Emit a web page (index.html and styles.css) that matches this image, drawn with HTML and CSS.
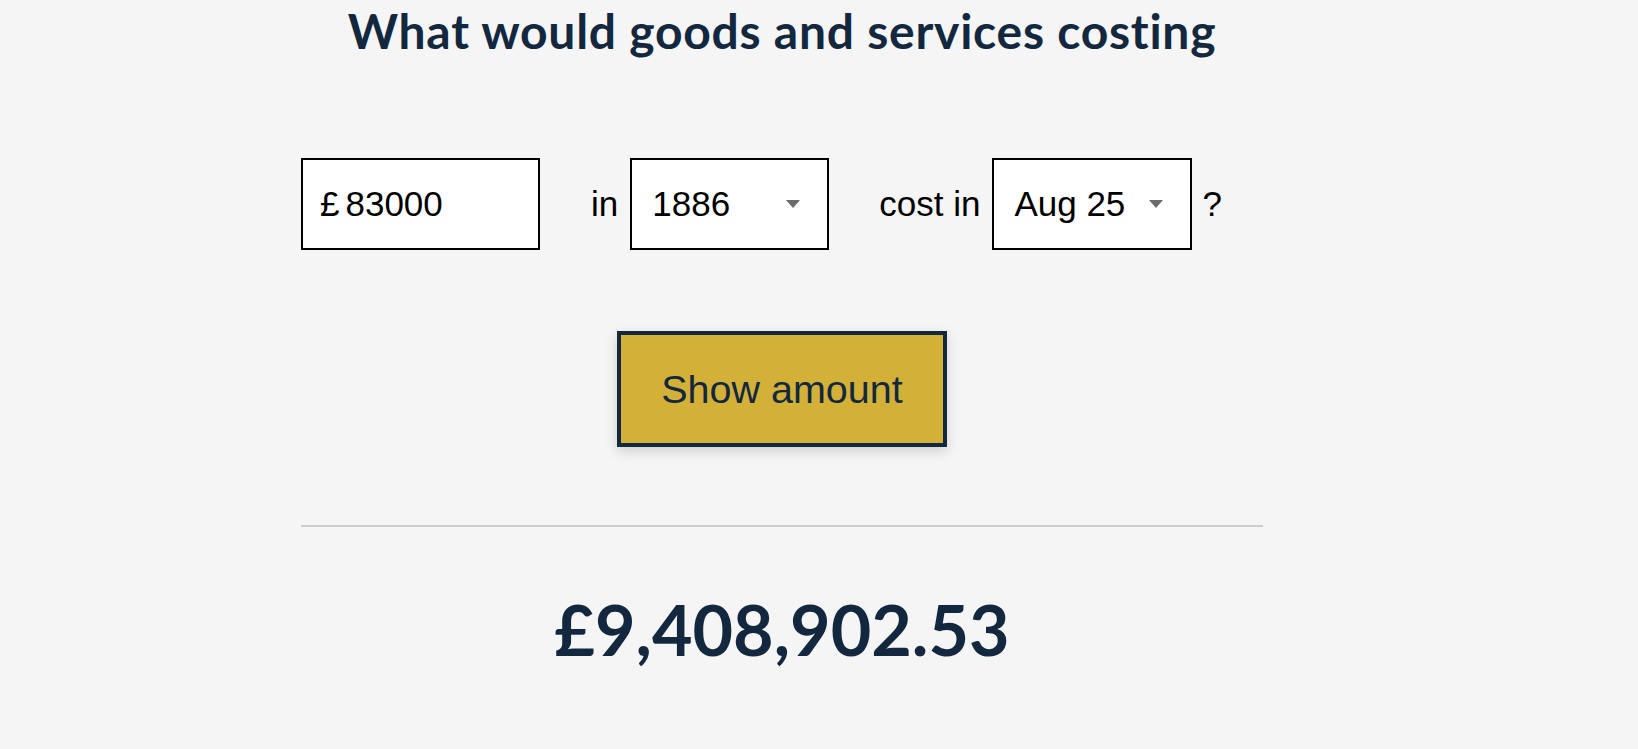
FILE: index.html
```html
<!DOCTYPE html>
<html lang="en">
<head>
<meta charset="utf-8">
<title>Inflation calculator</title>
<link rel="stylesheet" href="styles.css">
</head>
<body>
<main class="calc">
  <h1 class="calc-title">What would goods and services costing</h1>
  <form class="calc-form">
    <div class="calc-row">
      <label class="field field-amount">
        <span class="currency">£</span>
        <input class="amount-input" type="text" value="83000">
      </label>
      <span class="word word-in">in</span>
      <div class="field field-select field-year">
        <span class="select-value">1886</span>
        <span class="caret"></span>
      </div>
      <span class="word word-cost">cost in</span>
      <div class="field field-select field-month">
        <span class="select-value">Aug 25</span>
        <span class="caret"></span>
      </div>
      <span class="word word-q">?</span>
    </div>
    <div class="calc-actions">
      <button type="button" class="btn-show">Show amount</button>
    </div>
  </form>
  <hr class="divider">
  <p class="result">£9,408,902.53</p>
</main>
</body>
</html>
```
FILE: styles.css
```css
html, body {
  margin: 0;
  padding: 0;
  background: #f5f5f5;
}

body {
  font-family: "Liberation Sans", Arial, sans-serif;
  color: #000;
}

.calc {
  width: 962px;
  margin-left: 301px;
  display: flex;
  flex-direction: column;
}

.calc-title {
  margin: 0;
  padding-top: 3px;
  font-family: Lato, "Noto Sans", sans-serif;
  font-weight: 700;
  font-size: 48px;
  letter-spacing: 0.75px;
  line-height: 56px;
  color: #13283f;
  text-align: center;
}

.calc-form {
  margin: 99px 0 0;
  display: flex;
  flex-direction: column;
}

.calc-row {
  display: flex;
  align-items: center;
  height: 92px;
}

.field {
  box-sizing: border-box;
  height: 92px;
  border: 2px solid #000;
  background: #fff;
  display: flex;
  align-items: center;
  font-size: 35px;
}

.field-amount {
  width: 239px;
  padding-left: 17px;
}

.currency {
  font-size: 35px;
  margin-right: 6px;
}

.amount-input {
  border: 0;
  outline: 0;
  padding: 0;
  margin: 0;
  width: 180px;
  background: transparent;
  font-family: inherit;
  font-size: 35px;
  color: #000;
}

.word {
  font-size: 35px;
}

.word-in {
  margin: 0 12px 0 51px;
}

.word-cost {
  margin: 0 12px 0 50px;
}

.word-q {
  margin-left: 10px;
}

.field-select {
  justify-content: space-between;
  padding: 0 27px 0 20px;
}

.field-year {
  width: 199px;
}

.field-month {
  width: 200px;
}

.caret {
  width: 0;
  height: 0;
  border-left: 7.5px solid transparent;
  border-right: 7.5px solid transparent;
  border-top: 8px solid #6b6b6b;
}

.calc-actions {
  display: flex;
  justify-content: center;
  margin-top: 81px;
}

.btn-show {
  box-sizing: border-box;
  height: 116px;
  padding: 0 40px;
  background: #d3b037;
  border: 4px solid #13283f;
  border-radius: 0;
  color: #13283f;
  font-family: "Liberation Sans", Arial, sans-serif;
  font-size: 39.5px;
  line-height: 46px;
  box-shadow: 0 4px 12px rgba(0, 0, 0, 0.16);
  cursor: pointer;
}

.divider {
  margin: 78px 0 0;
  border: 0;
  height: 2px;
  background: #cccccc;
}

.result {
  margin: 60px 0 0;
  font-family: Lato, "Noto Sans", sans-serif;
  font-weight: 700;
  font-size: 70px;
  line-height: 84px;
  color: #13283f;
  text-align: center;
}
```
